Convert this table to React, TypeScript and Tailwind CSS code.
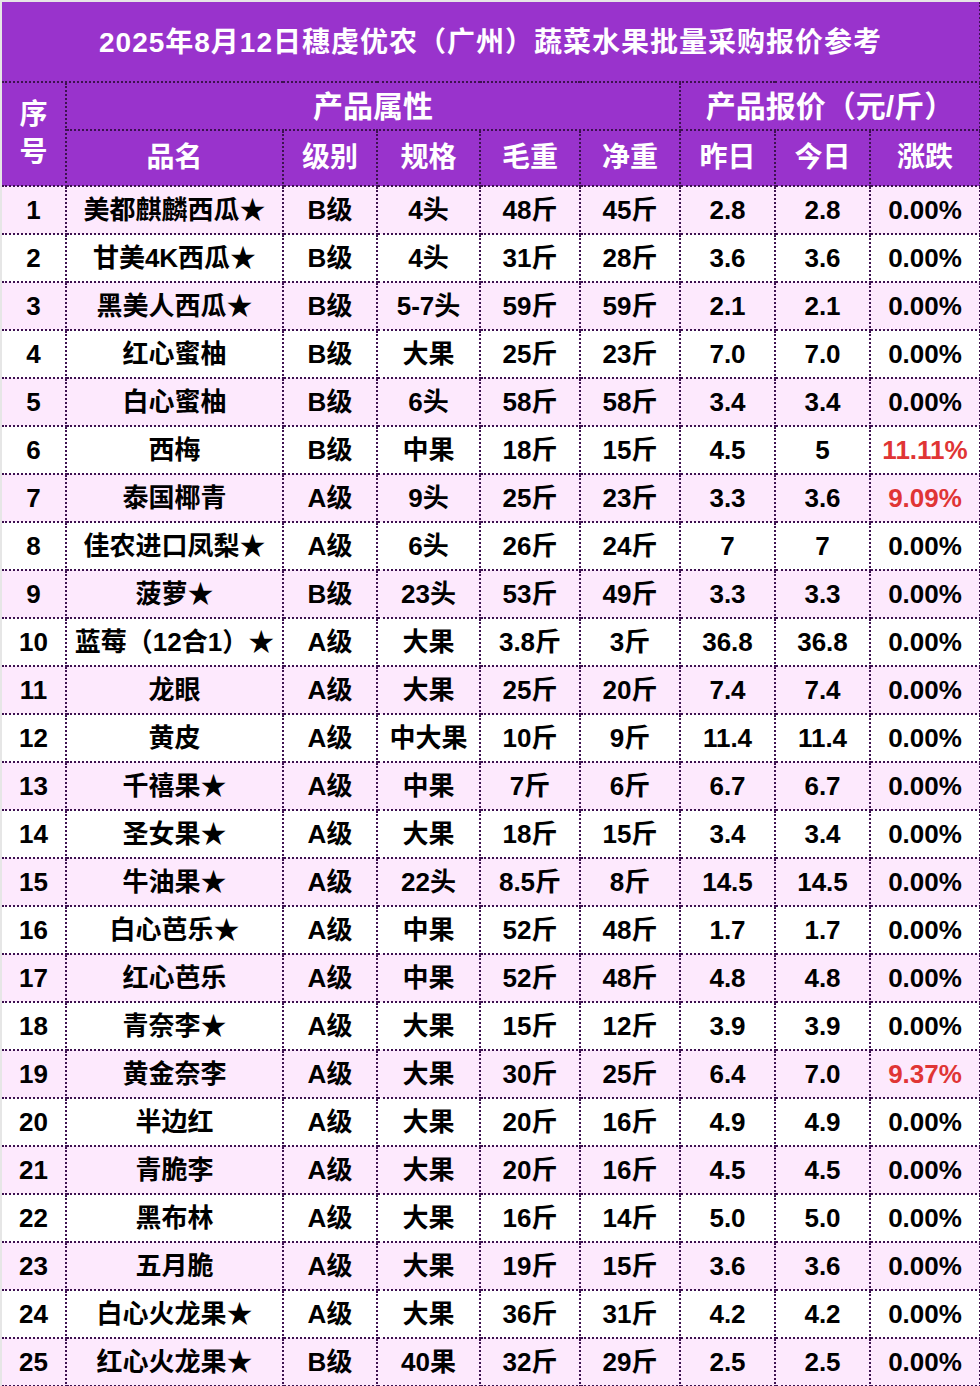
import React from "react";

type Row = {
  name: string;
  grade: string;
  spec: string;
  gross: string;
  net: string;
  yday: string;
  today: string;
  change: string;
  up?: boolean;
};

const rows: Row[] = [
  { name: "美都麒麟西瓜★", grade: "B级", spec: "4头", gross: "48斤", net: "45斤", yday: "2.8", today: "2.8", change: "0.00%" },
  { name: "甘美4K西瓜★", grade: "B级", spec: "4头", gross: "31斤", net: "28斤", yday: "3.6", today: "3.6", change: "0.00%" },
  { name: "黑美人西瓜★", grade: "B级", spec: "5-7头", gross: "59斤", net: "59斤", yday: "2.1", today: "2.1", change: "0.00%" },
  { name: "红心蜜柚", grade: "B级", spec: "大果", gross: "25斤", net: "23斤", yday: "7.0", today: "7.0", change: "0.00%" },
  { name: "白心蜜柚", grade: "B级", spec: "6头", gross: "58斤", net: "58斤", yday: "3.4", today: "3.4", change: "0.00%" },
  { name: "西梅", grade: "B级", spec: "中果", gross: "18斤", net: "15斤", yday: "4.5", today: "5", change: "11.11%", up: true },
  { name: "泰国椰青", grade: "A级", spec: "9头", gross: "25斤", net: "23斤", yday: "3.3", today: "3.6", change: "9.09%", up: true },
  { name: "佳农进口凤梨★", grade: "A级", spec: "6头", gross: "26斤", net: "24斤", yday: "7", today: "7", change: "0.00%" },
  { name: "菠萝★", grade: "B级", spec: "23头", gross: "53斤", net: "49斤", yday: "3.3", today: "3.3", change: "0.00%" },
  { name: "蓝莓（12合1）★", grade: "A级", spec: "大果", gross: "3.8斤", net: "3斤", yday: "36.8", today: "36.8", change: "0.00%" },
  { name: "龙眼", grade: "A级", spec: "大果", gross: "25斤", net: "20斤", yday: "7.4", today: "7.4", change: "0.00%" },
  { name: "黄皮", grade: "A级", spec: "中大果", gross: "10斤", net: "9斤", yday: "11.4", today: "11.4", change: "0.00%" },
  { name: "千禧果★", grade: "A级", spec: "中果", gross: "7斤", net: "6斤", yday: "6.7", today: "6.7", change: "0.00%" },
  { name: "圣女果★", grade: "A级", spec: "大果", gross: "18斤", net: "15斤", yday: "3.4", today: "3.4", change: "0.00%" },
  { name: "牛油果★", grade: "A级", spec: "22头", gross: "8.5斤", net: "8斤", yday: "14.5", today: "14.5", change: "0.00%" },
  { name: "白心芭乐★", grade: "A级", spec: "中果", gross: "52斤", net: "48斤", yday: "1.7", today: "1.7", change: "0.00%" },
  { name: "红心芭乐", grade: "A级", spec: "中果", gross: "52斤", net: "48斤", yday: "4.8", today: "4.8", change: "0.00%" },
  { name: "青奈李★", grade: "A级", spec: "大果", gross: "15斤", net: "12斤", yday: "3.9", today: "3.9", change: "0.00%" },
  { name: "黄金奈李", grade: "A级", spec: "大果", gross: "30斤", net: "25斤", yday: "6.4", today: "7.0", change: "9.37%", up: true },
  { name: "半边红", grade: "A级", spec: "大果", gross: "20斤", net: "16斤", yday: "4.9", today: "4.9", change: "0.00%" },
  { name: "青脆李", grade: "A级", spec: "大果", gross: "20斤", net: "16斤", yday: "4.5", today: "4.5", change: "0.00%" },
  { name: "黑布林", grade: "A级", spec: "大果", gross: "16斤", net: "14斤", yday: "5.0", today: "5.0", change: "0.00%" },
  { name: "五月脆", grade: "A级", spec: "大果", gross: "19斤", net: "15斤", yday: "3.6", today: "3.6", change: "0.00%" },
  { name: "白心火龙果★", grade: "A级", spec: "大果", gross: "36斤", net: "31斤", yday: "4.2", today: "4.2", change: "0.00%" },
  { name: "红心火龙果★", grade: "B级", spec: "40果", gross: "32斤", net: "29斤", yday: "2.5", today: "2.5", change: "0.00%" },
];

const font = {
  fontFamily: '"Liberation Sans", "Noto Sans CJK SC", sans-serif',
};

const cell = "border-2 border-dotted border-[#3d1150] text-center p-0";
const head = `${cell} text-white font-bold text-[28px]`;
const headTop = `${cell} text-white font-bold text-[30px]`;

export default function App() {
  return (
    <div className="w-[980px] h-[1386px] bg-[#e6e6e6] pt-[2px] pl-[2px] overflow-hidden" style={font}>
      <table className="w-[978px] table-fixed border-collapse">
        <colgroup>
          <col className="w-[64px]" />
          <col className="w-[217px]" />
          <col className="w-[94px]" />
          <col className="w-[103px]" />
          <col className="w-[100px]" />
          <col className="w-[100px]" />
          <col className="w-[95px]" />
          <col className="w-[95px]" />
          <col className="w-[110px]" />
        </colgroup>
        <thead className="bg-[#9933cc]">
          <tr className="h-[80px]">
            <th colSpan={9} className="border-2 border-dotted border-[#3d1150] border-t-0 border-l-0 text-white font-bold text-[28px] text-center tracking-[1px] pt-[3px]">
              2025年8月12日穗虔优农（广州）蔬菜水果批量采购报价参考
            </th>
          </tr>
          <tr className="h-[48px]">
            <th rowSpan={2} className={`${head} border-l-0 leading-[38px]`}>
              序<br />号
            </th>
            <th colSpan={5} className={headTop}>产品属性</th>
            <th colSpan={3} className={headTop}>产品报价（元/斤）</th>
          </tr>
          <tr className="h-[56px]">
            <th className={head}>品名</th>
            <th className={head}>级别</th>
            <th className={head}>规格</th>
            <th className={head}>毛重</th>
            <th className={head}>净重</th>
            <th className={head}>昨日</th>
            <th className={head}>今日</th>
            <th className={head}>涨跌</th>
          </tr>
        </thead>
        <tbody className="text-[26px] font-bold text-black">
          {rows.map((r, i) => (
            <tr key={i} className={`h-[48px] ${i % 2 === 0 ? "bg-[#fde9fd]" : "bg-white"}`}>
              <td className={`${cell} border-l-0`}>{i + 1}</td>
              <td className={cell}>{r.name}</td>
              <td className={cell}>{r.grade}</td>
              <td className={cell}>{r.spec}</td>
              <td className={cell}>{r.gross}</td>
              <td className={cell}>{r.net}</td>
              <td className={cell}>{r.yday}</td>
              <td className={cell}>{r.today}</td>
              <td className={`${cell} ${r.up ? "text-[#e03535]" : ""}`}>{r.change}</td>
            </tr>
          ))}
        </tbody>
      </table>
    </div>
  );
}
